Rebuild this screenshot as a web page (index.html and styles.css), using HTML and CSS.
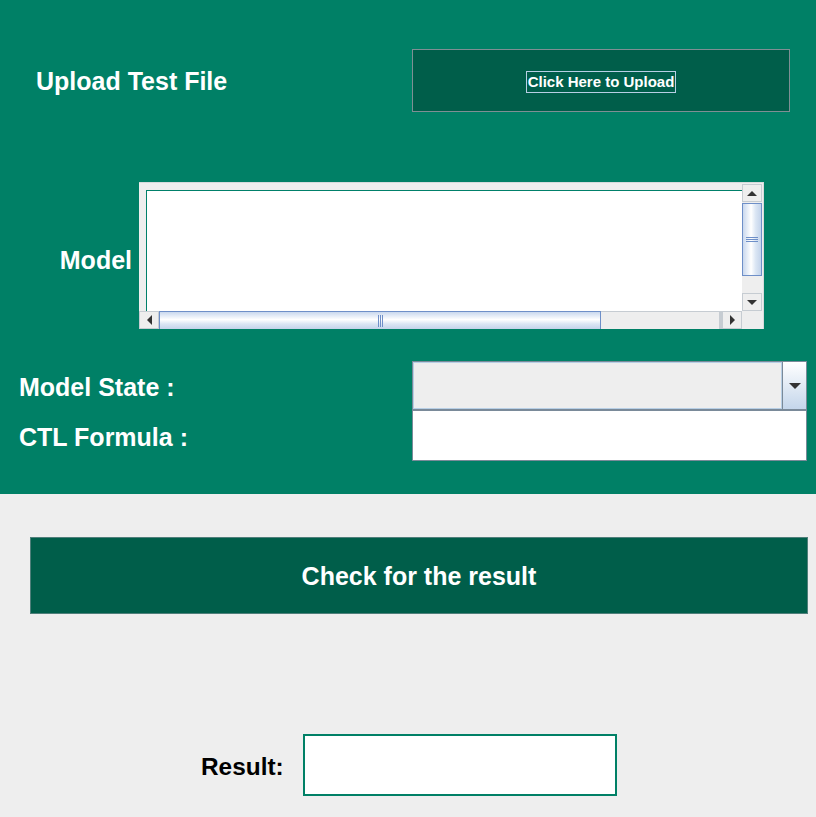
FILE: index.html
```html
<!DOCTYPE html>
<html>
<head>
<meta charset="utf-8">
<link rel="stylesheet" href="styles.css">
</head>
<body>
<div class="top">
  <div class="upload-row">
    <div class="lbl lbl-upload">Upload Test File</div>
    <div class="btn-upload"><span class="focus">Click Here to Upload</span></div>
  </div>
  <div class="model-row">
    <div class="lbl lbl-model">Model</div>
    <div class="scrollpane">
      <div class="viewport"><div class="textarea"></div></div>
      <div class="vbar">
        <div class="sbtn"><span class="tri-up"></span></div>
        <div class="vthumb"><span class="vgrip"></span></div>
        <div class="track"></div>
        <div class="sbtn"><span class="tri-down"></span></div>
      </div>
      <div class="hbar">
        <div class="sbtn hbtn"><span class="tri-left"></span></div>
        <div class="hthumb"><span class="hgrip"></span></div>
        <div class="track"></div>
        <div class="sbtn hbtn"><span class="tri-right"></span></div>
      </div>
      <div class="corner"></div>
    </div>
  </div>
  <div class="form-row state-row">
    <div class="lbl lbl-form">Model State :</div>
    <div class="combo">
      <div class="combo-display"></div>
      <div class="combo-arrow"><span class="tri-down"></span></div>
    </div>
  </div>
  <div class="form-row">
    <div class="lbl lbl-form">CTL Formula :</div>
    <div class="field"></div>
  </div>
</div>
<div class="bottom">
  <div class="check-btn">Check for the result</div>
  <div class="result-row">
    <div class="result-lbl">Result:</div>
    <div class="result-field"></div>
  </div>
</div>
</body>
</html>
```
FILE: styles.css
```css
* { box-sizing: border-box; }
html, body { margin: 0; padding: 0; }
body {
  width: 816px;
  height: 817px;
  overflow: hidden;
  font-family: "Liberation Sans", Arial, sans-serif;
  background: #eeeeee;
}
.top {
  background: #008066;
  height: 494px;
  padding-top: 49px;
}
.lbl {
  color: #ffffff;
  font-weight: bold;
  font-size: 25px;
  white-space: nowrap;
}
.upload-row {
  display: flex;
  align-items: center;
  height: 63px;
  padding-left: 36px;
}
.lbl-upload { width: 376px; margin-top: 2px; }
.btn-upload {
  width: 378px;
  height: 63px;
  border: 1px solid #7f8f94;
  background: #005e4a;
  display: flex;
  align-items: center;
  justify-content: center;
  padding-top: 2px;
}
.focus {
  color: #ffffff;
  font-weight: bold;
  font-size: 15px;
  line-height: 20px;
  border: 1px solid #b8cfe5;
  padding: 0 1px;
}
.model-row {
  margin-top: 70px;
  display: flex;
  height: 147px;
}
.lbl-model {
  width: 139px;
  text-align: right;
  padding-right: 7px;
  align-self: center;
  margin-top: 9px;
}
.scrollpane {
  width: 625px;
  height: 147px;
  background: #eeeeee;
  border-top: 1px solid #d6dadc;
  border-right: 1px solid #d6dadc;
  padding-right: 1px;
  display: grid;
  grid-template-columns: 1fr 20px;
  grid-template-rows: 1fr 18px;
}
.viewport {
  padding: 7px 0 0 7px;
}
.textarea {
  width: 100%;
  height: 100%;
  background: #ffffff;
  border-left: 1px solid #00806a;
  border-top: 1px solid #00806a;
}
.vbar {
  display: flex;
  flex-direction: column;
  padding-top: 1px;
}
.sbtn {
  height: 18px;
  background: #eeeeee;
  border: 1px solid #c6ccd2;
  display: flex;
  align-items: center;
  justify-content: center;
  flex: 0 0 auto;
}
.hbtn { width: 20px; height: 18px; }
.vthumb {
  height: 73px;
  margin-top: 1px;
  border: 1px solid #6e8fc8;
  background: linear-gradient(to right, #c9d8ee, #ffffff 45%, #dbe6f4 70%, #c3d3ea);
  display: flex;
  align-items: center;
  justify-content: center;
}
.vgrip {
  width: 12px;
  height: 5px;
  border-top: 1px solid #6e8fc8;
  border-bottom: 1px solid #6e8fc8;
  position: relative;
}
.vgrip::after {
  content: "";
  position: absolute;
  left: 0;
  right: 0;
  top: 1px;
  border-top: 1px solid #6e8fc8;
}
.track { flex: 1; background: #eeeeee; }
.hbar {
  display: flex;
}
.hthumb {
  width: 442px;
  border: 1px solid #6e8fc8;
  border-bottom: none;
  background: linear-gradient(to bottom, #c9d8ee, #ffffff 45%, #dbe6f4 70%, #c3d3ea);
  display: flex;
  align-items: center;
  justify-content: center;
}
.hgrip {
  width: 5px;
  height: 12px;
  border-left: 1px solid #6e8fc8;
  border-right: 1px solid #6e8fc8;
  position: relative;
}
.hgrip::after {
  content: "";
  position: absolute;
  top: 0;
  bottom: 0;
  left: 1px;
  border-left: 1px solid #6e8fc8;
}
.hbar .track { border-top: 1px solid #c6ccd2; border-right: 3px solid #c6ccd2; }
.corner { background: #eeeeee; }
.tri-up {
  width: 0; height: 0;
  border-left: 5px solid transparent;
  border-right: 5px solid transparent;
  border-bottom: 5px solid #333333;
}
.tri-down {
  width: 0; height: 0;
  border-left: 5px solid transparent;
  border-right: 5px solid transparent;
  border-top: 5px solid #333333;
}
.tri-left {
  width: 0; height: 0;
  border-top: 5px solid transparent;
  border-bottom: 5px solid transparent;
  border-right: 5px solid #333333;
}
.tri-right {
  width: 0; height: 0;
  border-top: 5px solid transparent;
  border-bottom: 5px solid transparent;
  border-left: 5px solid #333333;
}
.form-row {
  display: flex;
  align-items: center;
  height: 50px;
  padding-left: 19px;
}
.state-row { margin-top: 32px; }
.lbl-form { width: 393px; margin-top: 2px; }
.combo {
  width: 395px;
  height: 50px;
  border: 1px solid #7a8a99;
  border-bottom-width: 2px;
  background: #eeeeee;
  display: flex;
}
.combo-display {
  flex: 1;
  border: 1px solid #b8cfe5;
}
.combo-arrow {
  width: 24px;
  border-left: 1px solid #7a8a99;
  background: linear-gradient(to bottom, #ffffff, #c4d6eb);
  display: flex;
  align-items: center;
  justify-content: center;
}
.combo-arrow .tri-down {
  border-left-width: 6px;
  border-right-width: 6px;
  border-top-width: 6px;
}
.field {
  width: 395px;
  height: 50px;
  background: #ffffff;
  border: 1px solid #7a8a99;
  border-top: none;
}
.bottom {
  padding-top: 43px;
}
.check-btn {
  margin-left: 30px;
  width: 778px;
  height: 77px;
  border: 1px solid #4f7f7a;
  background: #005e4a;
  color: #ffffff;
  font-weight: bold;
  font-size: 25px;
  text-align: center;
  line-height: 77px;
}
.result-row {
  margin-top: 120px;
  display: flex;
  align-items: center;
  padding-left: 201px;
}
.result-lbl {
  width: 102px;
  color: #000000;
  font-weight: bold;
  font-size: 24.4px;
  margin-top: 3px;
}
.result-field {
  width: 314px;
  height: 62px;
  background: #ffffff;
  border: 2px solid #008066;
}
```
